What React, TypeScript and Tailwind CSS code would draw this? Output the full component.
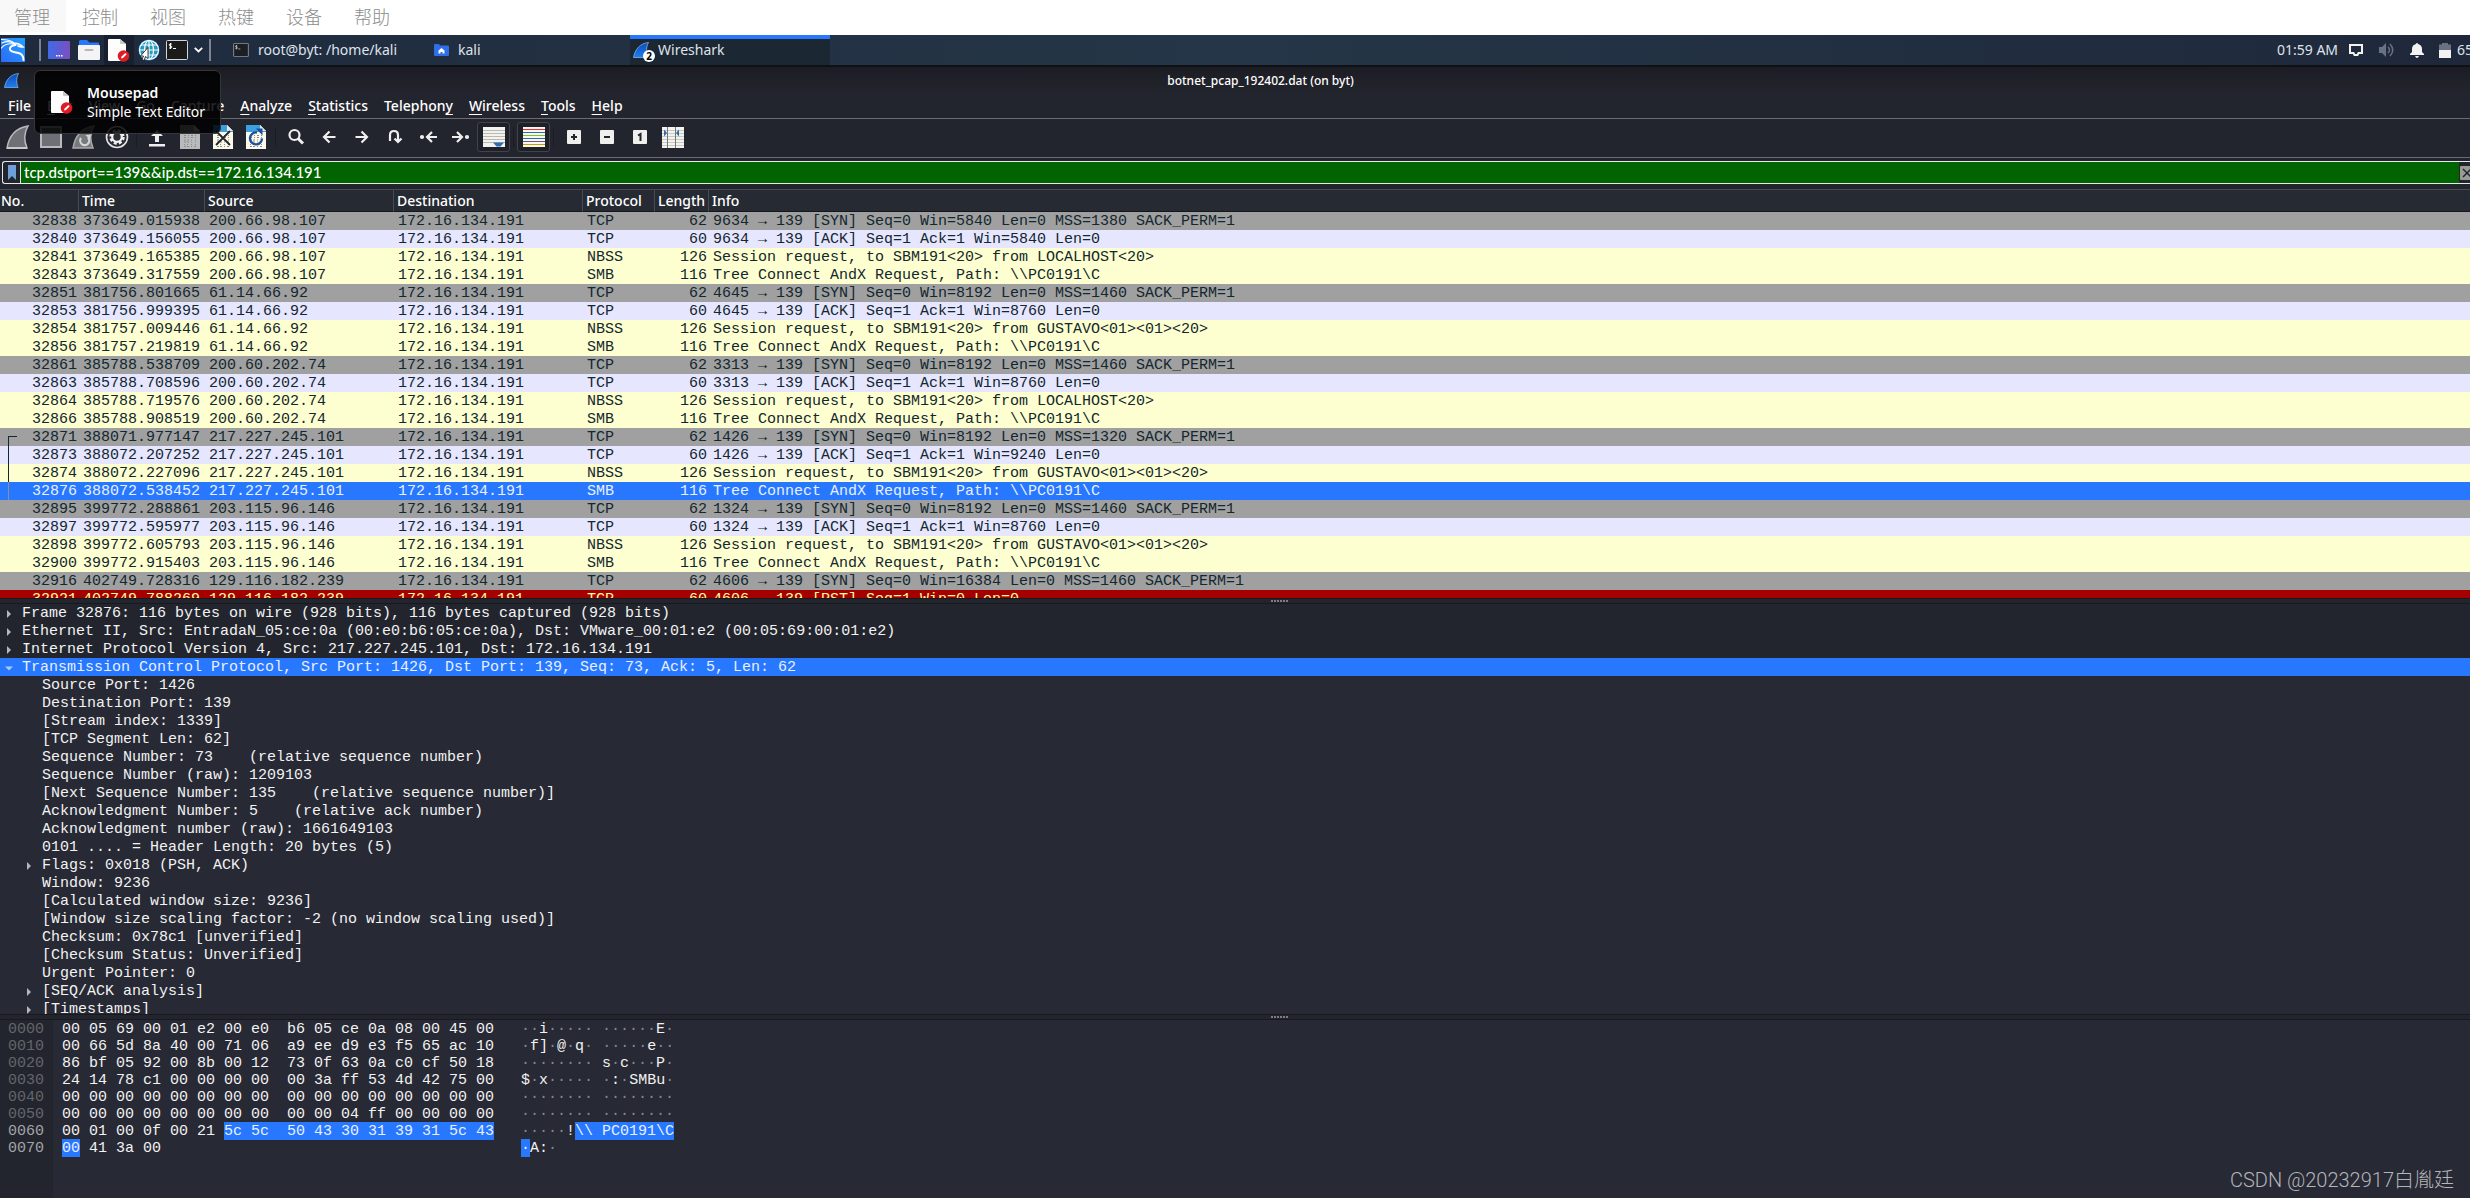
import type { ReactNode } from "react";
import clsx from "clsx";

const hostMenu = ["控制", "视图", "热键", "设备", "帮助"];

const appMenu: [string, string, string][] = [
  ["", "F", "ile"],
  ["", "E", "dit"],
  ["", "V", "iew"],
  ["", "G", "o"],
  ["", "C", "apture"],
  ["", "A", "nalyze"],
  ["", "S", "tatistics"],
  ["Telephon", "y", ""],
  ["", "W", "ireless"],
  ["", "T", "ools"],
  ["", "H", "elp"],
];

const DST = "172.16.134.191";

// no, time, source, protocol, length, info
const packets: [string, string, string, string, string, string][] = [
  ["32838", "373649.015938", "200.66.98.107", "TCP", "62", "9634 → 139 [SYN] Seq=0 Win=5840 Len=0 MSS=1380 SACK_PERM=1"],
  ["32840", "373649.156055", "200.66.98.107", "TCP", "60", "9634 → 139 [ACK] Seq=1 Ack=1 Win=5840 Len=0"],
  ["32841", "373649.165385", "200.66.98.107", "NBSS", "126", "Session request, to SBM191<20> from LOCALHOST<20>"],
  ["32843", "373649.317559", "200.66.98.107", "SMB", "116", "Tree Connect AndX Request, Path: \\\\PC0191\\C"],
  ["32851", "381756.801665", "61.14.66.92", "TCP", "62", "4645 → 139 [SYN] Seq=0 Win=8192 Len=0 MSS=1460 SACK_PERM=1"],
  ["32853", "381756.999395", "61.14.66.92", "TCP", "60", "4645 → 139 [ACK] Seq=1 Ack=1 Win=8760 Len=0"],
  ["32854", "381757.009446", "61.14.66.92", "NBSS", "126", "Session request, to SBM191<20> from GUSTAVO<01><01><20>"],
  ["32856", "381757.219819", "61.14.66.92", "SMB", "116", "Tree Connect AndX Request, Path: \\\\PC0191\\C"],
  ["32861", "385788.538709", "200.60.202.74", "TCP", "62", "3313 → 139 [SYN] Seq=0 Win=8192 Len=0 MSS=1460 SACK_PERM=1"],
  ["32863", "385788.708596", "200.60.202.74", "TCP", "60", "3313 → 139 [ACK] Seq=1 Ack=1 Win=8760 Len=0"],
  ["32864", "385788.719576", "200.60.202.74", "NBSS", "126", "Session request, to SBM191<20> from LOCALHOST<20>"],
  ["32866", "385788.908519", "200.60.202.74", "SMB", "116", "Tree Connect AndX Request, Path: \\\\PC0191\\C"],
  ["32871", "388071.977147", "217.227.245.101", "TCP", "62", "1426 → 139 [SYN] Seq=0 Win=8192 Len=0 MSS=1320 SACK_PERM=1"],
  ["32873", "388072.207252", "217.227.245.101", "TCP", "60", "1426 → 139 [ACK] Seq=1 Ack=1 Win=9240 Len=0"],
  ["32874", "388072.227096", "217.227.245.101", "NBSS", "126", "Session request, to SBM191<20> from GUSTAVO<01><01><20>"],
  ["32876", "388072.538452", "217.227.245.101", "SMB", "116", "Tree Connect AndX Request, Path: \\\\PC0191\\C"],
  ["32895", "399772.288861", "203.115.96.146", "TCP", "62", "1324 → 139 [SYN] Seq=0 Win=8192 Len=0 MSS=1460 SACK_PERM=1"],
  ["32897", "399772.595977", "203.115.96.146", "TCP", "60", "1324 → 139 [ACK] Seq=1 Ack=1 Win=8760 Len=0"],
  ["32898", "399772.605793", "203.115.96.146", "NBSS", "126", "Session request, to SBM191<20> from GUSTAVO<01><01><20>"],
  ["32900", "399772.915403", "203.115.96.146", "SMB", "116", "Tree Connect AndX Request, Path: \\\\PC0191\\C"],
  ["32916", "402749.728316", "129.116.182.239", "TCP", "62", "4606 → 139 [SYN] Seq=0 Win=16384 Len=0 MSS=1460 SACK_PERM=1"],
  ["32921", "402749.788269", "129.116.182.239", "TCP", "60", "4606 → 139 [RST] Seq=1 Win=0 Len=0"],
];

const SELECTED = "32876";

const rowColor = (no: string, protocol: string, info: string) => {
  if (no === SELECTED) return "bg-[#2777ff] text-[#e8f0ff]";
  if (info.includes("[RST]")) return "bg-[#a40000] text-[#fffc9c]";
  if (info.includes("[SYN]")) return "bg-[#a0a0a0] text-[#12272e]";
  if (protocol === "TCP") return "bg-[#e7e6ff] text-[#12272e]";
  return "bg-[#feffd0] text-[#12272e]";
};

// marks the packets that belong to the selected conversation
const streamMark: Record<string, string> = {
  "32871": "top-2 bottom-0 w-[9px] border-l border-t border-[#12272e]",
  "32873": "inset-y-0 border-l border-[#12272e]",
  "32874": "inset-y-0 border-l border-[#12272e]",
  "32876": "inset-y-0 border-l border-[#8a8f98]",
};

const layers = [
  "Frame 32876: 116 bytes on wire (928 bits), 116 bytes captured (928 bits)",
  "Ethernet II, Src: EntradaN_05:ce:0a (00:e0:b6:05:ce:0a), Dst: VMware_00:01:e2 (00:05:69:00:01:e2)",
  "Internet Protocol Version 4, Src: 217.227.245.101, Dst: 172.16.134.191",
];

const tcpFields: { text: string; expandable?: boolean }[] = [
  { text: "Source Port: 1426" },
  { text: "Destination Port: 139" },
  { text: "[Stream index: 1339]" },
  { text: "[TCP Segment Len: 62]" },
  { text: "Sequence Number: 73    (relative sequence number)" },
  { text: "Sequence Number (raw): 1209103" },
  { text: "[Next Sequence Number: 135    (relative sequence number)]" },
  { text: "Acknowledgment Number: 5    (relative ack number)" },
  { text: "Acknowledgment number (raw): 1661649103" },
  { text: "0101 .... = Header Length: 20 bytes (5)" },
  { text: "Flags: 0x018 (PSH, ACK)", expandable: true },
  { text: "Window: 9236" },
  { text: "[Calculated window size: 9236]" },
  { text: "[Window size scaling factor: -2 (no window scaling used)]" },
  { text: "Checksum: 0x78c1 [unverified]" },
  { text: "[Checksum Status: Unverified]" },
  { text: "Urgent Pointer: 0" },
  { text: "[SEQ/ACK analysis]", expandable: true },
  { text: "[Timestamps]", expandable: true },
];

// each dump is split as [before, selected, after]
type Parts = [string, string, string];
const bytes: { offset: string; hex: Parts; ascii: Parts }[] = [
  { offset: "0000", hex: ["00 05 69 00 01 e2 00 e0  b6 05 ce 0a 08 00 45 00", "", ""], ascii: ["··i····· ······E·", "", ""] },
  { offset: "0010", hex: ["00 66 5d 8a 40 00 71 06  a9 ee d9 e3 f5 65 ac 10", "", ""], ascii: ["·f]·@·q· ·····e··", "", ""] },
  { offset: "0020", hex: ["86 bf 05 92 00 8b 00 12  73 0f 63 0a c0 cf 50 18", "", ""], ascii: ["········ s·c···P·", "", ""] },
  { offset: "0030", hex: ["24 14 78 c1 00 00 00 00  00 3a ff 53 4d 42 75 00", "", ""], ascii: ["$·x····· ·:·SMBu·", "", ""] },
  { offset: "0040", hex: ["00 00 00 00 00 00 00 00  00 00 00 00 00 00 00 00", "", ""], ascii: ["········ ········", "", ""] },
  { offset: "0050", hex: ["00 00 00 00 00 00 00 00  00 00 04 ff 00 00 00 00", "", ""], ascii: ["········ ········", "", ""] },
  { offset: "0060", hex: ["00 01 00 0f 00 21 ", "5c 5c  50 43 30 31 39 31 5c 43", ""], ascii: ["·····!", "\\\\ PC0191\\C", ""] },
  { offset: "0070", hex: ["", "00", " 41 3a 00"], ascii: ["", "·", "A:·"] },
];

/* ---------- icons ---------- */

const KaliLogo = () => (
  <svg width="24" height="24" viewBox="0 0 24 24">
    <defs>
      <linearGradient id="kali" x1="0" y1="1" x2="1" y2="0">
        <stop offset="0" stopColor="#2b6cf6" />
        <stop offset="1" stopColor="#22a0ff" />
      </linearGradient>
    </defs>
    <path d="M0 0h24v24H0z" fill="url(#kali)" />
    <g fill="none" stroke="#fff" strokeLinecap="round">
      <path d="M.5 1.500C5 1.500 9 2 12.500 4.500" strokeWidth="1.200" />
      <path d="M1 5c3-1.500 8-2 12.500.5" strokeWidth="1.200" />
      <path d="M.5 10C3 6.500 8 5 14 6.200" strokeWidth="1.200" />
      <path d="M13 5.500c3-.5 6 .5 9 3.500-2 .2-3.500-.2-5-1" strokeWidth="1.600" />
      <path d="M14.500 7c-4 .3-6 2.200-5.500 4.500.6 2.600 5 2.600 8.500 3.500 3.500 1 5 3.500 5 7" strokeWidth="2" />
    </g>
  </svg>
);

const DesktopIcon = () => (
  <svg width="22" height="18" viewBox="0 0 22 18">
    <defs>
      <linearGradient id="desk" x1="0" y1="0" x2="1" y2="0">
        <stop offset="0" stopColor="#3f6be8" />
        <stop offset="1" stopColor="#7a4fc0" />
      </linearGradient>
    </defs>
    <rect width="22" height="18" rx="1" fill="url(#desk)" />
    <path d="M8 14h1.500v1.500H8zM10.500 14H12v1.500h-1.500zM13 14h1.500v1.500H13z" fill="#fff" />
  </svg>
);

const FilesIcon = () => (
  <svg width="22" height="20" viewBox="0 0 22 20">
    <path d="M1 6V1.500Q1 0 2.500 0H9l2.500 2.500H20q1 0 1 1V8H1z" fill="#2777ff" />
    <rect y="5" width="22" height="15" rx="1" fill="#f4f4f4" />
    <rect x="6.500" y="9" width="9" height="2" rx="1" fill="#b8b8b8" />
  </svg>
);

const MousepadIcon = () => (
  <svg width="22" height="23" viewBox="0 0 22 23">
    <path d="M1 0h11l6 5v17H1q-1 0-1-1V1q0-1 1-1z" fill="#fdfdfd" />
    <path d="M12 0v4q0 1 1 1h5z" fill="#c9c9c9" />
    <circle cx="15.500" cy="17" r="5.800" fill="#e01b24" />
    <path d="m13 19.500.6-2 3.700-3.600 1.400 1.400-3.700 3.600z" fill="#fff" />
  </svg>
);

const GlobeIcon = () => (
  <svg width="22" height="22" viewBox="0 0 22 22">
    <circle cx="11" cy="11" r="10.500" fill="#1f8fd6" />
    <circle cx="11" cy="11" r="8" fill="#2ba7a8" opacity=".6" />
    <g fill="none" stroke="#fff" strokeWidth="1.200">
      <circle cx="11" cy="11" r="9.500" />
      <ellipse cx="11" cy="11" rx="4.500" ry="9.500" />
      <path d="M11 1v20M1.500 11h19M3 6h16M3 16h16" />
    </g>
  </svg>
);

const TerminalIcon = ({ className }: { className: string }) => (
  <svg className={className} viewBox="0 0 22 20">
    <rect x=".5" y=".5" width="21" height="19" rx="1" fill="#1b1b1b" stroke="#d5d5d5" />
    <path d="M5.800 4H4.200q-1 0-1 1t1 1h.6q1 0 1 1t-1 1H3M4.500 3v6M7 8.500h3" fill="none" stroke="#fff" />
  </svg>
);

const HomeFolderIcon = () => (
  <svg width="15" height="12" viewBox="0 0 15 12">
    <path d="M0 2V1q0-1 1-1h4l1 1.500h8q1 0 1 1V11q0 1-1 1H1q-1 0-1-1z" fill="#2e6fe8" />
    <path d="M7.500 4 4.500 6.500V9.500H6.500V8h2v1.500h2V6.500z" fill="#fff" />
  </svg>
);

const BlueFin = ({ className }: { className: string }) => (
  <svg className={className} viewBox="0 0 16 16">
    <defs>
      <linearGradient id="fin" x1="0" y1="0" x2="0" y2="1">
        <stop offset="0" stopColor="#0c4bb4" />
        <stop offset="1" stopColor="#1f7ff0" />
      </linearGradient>
    </defs>
    <path d="M.5 15.500C2 7 7 1.500 15.500.5 13 5 13 10 15 15.500z" fill="url(#fin)" stroke="#8fc0f5" strokeWidth=".7" />
  </svg>
);

const FIN = "M1 23C3 11 10 3 22 1c-4 7-4 15-1 22z";

const StartIcon = () => (
  <svg width="24" height="24" viewBox="0 0 24 24">
    <path d={FIN} fill="#6e7075" stroke="#b9babd" strokeWidth="1.500" />
    <path d="M1 23h20" stroke="#c8c9cb" strokeWidth="2" />
  </svg>
);

const StopIcon = () => (
  <svg width="24" height="24" viewBox="0 0 24 24">
    <rect x="2" y="2" width="20" height="20" fill="#6e7075" stroke="#b9babd" strokeWidth="2" />
  </svg>
);

const RestartIcon = () => (
  <svg width="24" height="24" viewBox="0 0 24 24">
    <path d={FIN} fill="#77797d" stroke="#a9aaad" strokeWidth="1.500" />
    <path d="M9 13a4.500 4.500 0 1 0 7-.5" fill="none" stroke="#d4d5d6" strokeWidth="2.200" />
    <path d="m13.500 10 5.500-.5-1 5.500z" fill="#d4d5d6" />
  </svg>
);

const OptionsIcon = () => (
  <svg width="24" height="24" viewBox="0 0 24 24">
    <circle cx="12" cy="12" r="10.500" fill="#2c2d33" stroke="#e6e6e6" strokeWidth="1.600" />
    <circle cx="12" cy="12" r="6.500" fill="none" stroke="#f2f2f2" strokeWidth="2.400" strokeDasharray="3 2.100" />
    <circle cx="12" cy="12" r="4.800" fill="none" stroke="#f2f2f2" strokeWidth="2.200" />
  </svg>
);

const OpenIcon = () => (
  <svg width="24" height="24" viewBox="0 0 24 24" fill="#efefef">
    <path d="M4 19h16v2.500H4zM12 5l6 6h-4v6h-4v-6H6z" />
  </svg>
);

const FileIcon = ({ tone, band, children }: { tone: string; band: string; children?: ReactNode }) => (
  <svg width="20" height="24" viewBox="0 0 20 24">
    <path d="M0 0h14l6 6v18H0z" fill={tone} />
    <path d="M0 0h14v6h6v1H0z" fill={band} />
    <path d="M14 0v6h6z" fill="#e9e9e9" />
    <path d="M4 10.500h2M8 10.500h1M11 10.500h2M15 10.500h1M4 12.500h2M8 12.500h1M11 12.500h2M15 12.500h1M4 15h2M7 15h2M11 15h1M15 15h1M4 17h2M7 17h2M11 17h1M15 17h1M4 19.500h1M7 19.500h1M11 19.500h1M15 19.500h1M4 21.500h2M7 21.500h2M11 21.500h1M14 21.500h2" stroke="#8d8d88" strokeWidth="1.200" />
    {children}
  </svg>
);

const CloseFileIcon = () => (
  <FileIcon tone="#fbfaea" band="#3b9fe0">
    <path d="m3 6 14 14M17 6 3 20" stroke="#23272e" strokeWidth="1.800" />
  </FileIcon>
);

const ReloadIcon = () => (
  <FileIcon tone="#fbfaea" band="#3b9fe0">
    <path d="M11 7.500a6 6 0 1 0 5 6" fill="none" stroke="#1d4f9c" strokeWidth="2.400" />
    <path d="M10 3.500h6.500v7z" fill="#1d4f9c" />
  </FileIcon>
);

const LineIcon = ({ children }: { children: ReactNode }) => (
  <svg width="18" height="18" viewBox="0 0 18 18" fill="none" stroke="#efefef" strokeWidth="2.200">
    {children}
  </svg>
);

const FindIcon = () => (
  <LineIcon>
    <circle cx="7.500" cy="7" r="5" />
    <path d="m11 10.500 5 5" strokeWidth="3" />
  </LineIcon>
);
const BackIcon = () => (
  <LineIcon>
    <path d="M15.500 9H5M9.500 3.500 4 9l5.500 5.500" />
  </LineIcon>
);
const ForwardIcon = () => (
  <LineIcon>
    <path d="M2.500 9H13M8.500 3.500 14 9l-5.500 5.500" />
  </LineIcon>
);
const GotoIcon = () => (
  <LineIcon>
    <path d="M4 13V7q0-4 4-4t4 4v7M8.500 10.500l3.500 3.500 3.500-3.500" />
  </LineIcon>
);
const FirstIcon = () => (
  <LineIcon>
    <path d="M18 9H9M13 4 8 9l5 5" />
    <circle cx="3" cy="9" r="1" />
  </LineIcon>
);
const LastIcon = () => (
  <LineIcon>
    <path d="M0 9h9M5 4l5 5-5 5" />
    <circle cx="15" cy="9" r="1" />
  </LineIcon>
);

const AutoScrollIcon = () => (
  <svg width="22" height="20" viewBox="0 0 22 20">
    <path d="M0 0h22v20H0z" fill="#f2f2ee" />
    <path d="M0 3.500h22M0 6.500h22M0 9.500h22M0 12.500h22M0 15.500h22" stroke="#b9b9b4" />
    <path d="M10 15.500h11l-3.500 4h-4z" fill="#3069b4" />
  </svg>
);

const ColorizeIcon = () => (
  <svg width="22" height="20" viewBox="0 0 22 20">
    <path d="M0 0h22v20H0z" fill="#f7f7f3" />
    <path d="M0 2.500h22" stroke="#ef2929" />
    <path d="M0 5.500h22M0 11.500h22" stroke="#3069b4" />
    <path d="M0 8.500h22" stroke="#73c716" />
    <path d="M0 14.500h22" stroke="#75507b" />
    <path d="M0 17.500h22" stroke="#c4a000" />
  </svg>
);

const SquareIcon = ({ d }: { d: string }) => (
  <svg width="14" height="14" viewBox="0 0 14 14">
    <rect width="14" height="14" rx="1" fill="#efefec" />
    <path d={d} fill="none" stroke="#22252e" strokeWidth="2" />
  </svg>
);

const ResizeIcon = () => (
  <svg width="22" height="21" viewBox="0 0 22 21">
    <path d="M0 0h22v21H0z" fill="#f2f2ee" />
    <path d="M0 3.500h22M0 6.500h22M0 9.500h22M0 12.500h22M0 15.500h22M0 18.500h22" stroke="#c9c9c4" />
    <path d="M5.500 0v21M13.500 0v21" stroke="#77777a" />
    <path d="M2 2.500 5 6 2 9.500zM17 2.500 14 6l3 3.500z" fill="#3069b4" />
  </svg>
);

const Expander = ({ open }: { open?: boolean }) => (
  <svg width="8" height="8" viewBox="0 0 8 8" className="shrink-0">
    <path d={open ? "M0 2.500h8L4 6.500z" : "M2 0l4 4-4 4z"} fill={open ? "#a9c9ff" : "#b5b7bb"} />
  </svg>
);

/* ---------- pieces ---------- */

const ToolButton = ({ label, active, children }: { label: string; active?: boolean; children: ReactNode }) => (
  <button
    aria-label={label}
    className={clsx(
      "flex h-[30px] w-[33px] items-center justify-center",
      active && "rounded-[3px] border border-[#41434b] bg-[#1f2128]"
    )}
  >
    {children}
  </button>
);

const ToolSeparator = () => <span className="mx-[3px] h-5 w-px bg-[#1b1d23]" />;

const PanelSeparator = () => <span className="h-[22px] w-[2px] bg-[#7d8491]" />;

const HostMenu = () => (
  <nav className="flex h-[35px] bg-white font-['Noto_Sans_CJK_SC',sans-serif] text-lg leading-8 font-light text-[#8c8c8c]">
    <button className="h-8 w-[66px] bg-[#f8f8f8] pr-4 pl-[14px]">管理</button>
    {hostMenu.map((item) => (
      <button key={item} className="h-8 px-4">
        {item}
      </button>
    ))}
  </nav>
);

const Taskbar = () => (
  <header className="relative flex h-8 items-center overflow-hidden border-b-2 border-[#101116] bg-linear-to-r from-[#1f2a3d] via-[#243647] to-[#1f283b] text-sm text-[#dfe3ea]">
    <button aria-label="Applications" className="ml-px">
      <KaliLogo />
    </button>
    <span className="ml-[14px] flex">
      <PanelSeparator />
    </span>
    <button aria-label="Show desktop" className="flex w-9 justify-center">
      <DesktopIcon />
    </button>
    <button aria-label="File manager" className="ml-px flex w-[22px] justify-center">
      <FilesIcon />
    </button>
    <button aria-label="Text editor" className="ml-1 flex h-full w-[30px] items-center justify-center bg-[#182030]">
      <MousepadIcon />
    </button>
    <button aria-label="Web browser" className="relative flex w-[30px] justify-center">
      <GlobeIcon />
      <svg width="10" height="14" viewBox="0 0 10 14" className="absolute top-2 left-1.5">
        <path d="M8 .5v11l-2.500-2-1.500 4-2-1 1.500-3.500H.5z" fill="#fff" stroke="#111" strokeWidth=".8" />
      </svg>
    </button>
    <button aria-label="Terminal" className="ml-0.5">
      <TerminalIcon className="h-5 w-[22px]" />
    </button>
    <button aria-label="More terminals" className="ml-1.5">
      <svg width="9" height="6" viewBox="0 0 9 6" fill="none" stroke="#fff" strokeWidth="1.800">
        <path d="m.8.8 3.700 3.700L8.200.8" />
      </svg>
    </button>
    <span className="ml-1.5 flex">
      <PanelSeparator />
    </span>
    <div className="ml-[18px] flex h-full">
      <button className="flex w-[201px] items-center pl-1">
        <TerminalIcon className="mr-[9px] h-[14px] w-4 opacity-80" />
        root@byt: /home/kali
      </button>
      <button className="flex w-[200px] items-center pl-1">
        <span className="mr-[9px]">
          <HomeFolderIcon />
        </span>
        kali
      </button>
      <button className="flex w-[200px] items-center border-t-4 border-[#2777ff] bg-[#1b2733] pb-1 pl-[3px]">
        <span className="relative mr-[9px]">
          <BlueFin className="h-4 w-4" />
          <span className="absolute -right-1.5 -bottom-1 h-3 w-3 rounded-full bg-white text-center text-[10px] leading-3 font-bold text-black">
            2
          </span>
        </span>
        Wireshark
      </button>
    </div>
    <div className="ml-auto flex w-[193px] shrink-0 items-center overflow-hidden whitespace-nowrap">
      <span className="w-[72px] shrink-0">01:59 AM</span>
      <svg width="14" height="12" viewBox="0 0 14 12" className="shrink-0">
        <path d="M1 1h12v8H9.500l-1 2h-3l-1-2H1z" fill="none" stroke="#f2f2f2" strokeWidth="2" />
      </svg>
      <svg width="16" height="16" viewBox="0 0 16 16" className="ml-4 shrink-0" fill="#6a7180">
        <path d="M0 5h3l4-4v14l-4-4H0z" />
        <path d="M9 5q3 3 0 6M11 2q5.500 6 0 12" fill="none" stroke="#6a7180" strokeWidth="1.500" />
      </svg>
      <svg width="14" height="15" viewBox="0 0 14 15" className="ml-[15px] shrink-0" fill="#f2f2f2">
        <path d="M6 1q0-1 1-1t1 1q4 1 4 5v3l2 2v1H0v-1l2-2V6q0-4 4-5zM5 13h4q-1 2-2 2t-2-2z" />
      </svg>
      <svg width="12" height="15" viewBox="0 0 12 15" className="ml-[15px] shrink-0">
        <path d="M3 0h6v1.500h3V7H0V1.500h3z" fill="#6a7180" />
        <path d="M0 7h12v8H0z" fill="#f2f2f2" />
      </svg>
      <span className="ml-1.5">65%</span>
    </div>
  </header>
);

const LauncherTooltip = () => (
  <div
    role="tooltip"
    className="absolute top-[70px] left-[34px] flex h-16 w-[187px] items-center rounded-md border border-[#34363b] bg-black/85 pl-4 text-sm leading-[19px] text-white"
  >
    <span className="mr-[14px]">
      <MousepadIcon />
    </span>
    <div className="whitespace-nowrap">
      <p className="font-semibold">Mousepad</p>
      <p>Simple Text Editor</p>
    </div>
  </div>
);

const Toolbar = () => (
  <div className="flex h-[39px] items-center border-b border-[#6b6c72] bg-[#23252e] pb-0.5 pl-px">
    <ToolButton label="Start capture"><StartIcon /></ToolButton>
    <ToolButton label="Stop capture"><StopIcon /></ToolButton>
    <ToolButton label="Restart capture"><RestartIcon /></ToolButton>
    <ToolButton label="Capture options"><OptionsIcon /></ToolButton>
    <ToolSeparator />
    <ToolButton label="Open file"><OpenIcon /></ToolButton>
    <ToolButton label="Save file"><FileIcon tone="#b9babd" band="#a4a6a9" /></ToolButton>
    <ToolButton label="Close file"><CloseFileIcon /></ToolButton>
    <ToolButton label="Reload file"><ReloadIcon /></ToolButton>
    <ToolSeparator />
    <ToolButton label="Find packet"><FindIcon /></ToolButton>
    <ToolButton label="Previous packet"><BackIcon /></ToolButton>
    <ToolButton label="Next packet"><ForwardIcon /></ToolButton>
    <ToolButton label="Go to packet"><GotoIcon /></ToolButton>
    <ToolButton label="First packet"><FirstIcon /></ToolButton>
    <ToolButton label="Last packet"><LastIcon /></ToolButton>
    <ToolButton label="Auto scroll" active><AutoScrollIcon /></ToolButton>
    <ToolSeparator />
    <ToolButton label="Colorize" active><ColorizeIcon /></ToolButton>
    <ToolSeparator />
    <ToolButton label="Zoom in"><SquareIcon d="M4 7h6M7 4v6" /></ToolButton>
    <ToolButton label="Zoom out"><SquareIcon d="M4 7h6" /></ToolButton>
    <ToolButton label="Normal size"><SquareIcon d="M5 5.500 7.500 4v7" /></ToolButton>
    <ToolButton label="Resize columns"><ResizeIcon /></ToolButton>
  </div>
);

const FilterBar = () => (
  <div className="bg-[#23252e] pt-[3px] pb-[5px] pl-0.5">
    <div className="flex h-[23px] rounded-l-[3px] border border-r-0 border-[#e8e8e8]">
      <button aria-label="Filter bookmarks" className="flex w-[18px] items-center justify-center border-r border-[#e8e8e8]">
        <svg width="8" height="15" viewBox="0 0 8 15">
          <path d="M0 0h8v15l-4-4-4 4z" fill="#6f9fd8" />
        </svg>
      </button>
      <input
        aria-label="Display filter"
        defaultValue="tcp.dstport==139&&ip.dst==172.16.134.191"
        className="min-w-0 flex-1 bg-[#006400] pl-[3px] font-['Lato','Noto_Sans',sans-serif] text-[15px] font-medium text-white outline-none"
      />
      <button aria-label="Clear filter" className="flex w-[11px] items-center overflow-hidden pl-px">
        <svg width="14" height="14" viewBox="0 0 14 14" className="shrink-0">
          <rect width="14" height="14" rx="1" fill="#9a9b95" />
          <path d="m3 3 8 8M11 3l-8 8" stroke="#23252e" strokeWidth="1.500" />
        </svg>
      </button>
    </div>
  </div>
);

const headCell = "h-[23px] border-t border-b border-t-[#484b52] border-b-[#15171b] bg-[#262a32] text-left font-medium text-white";

const PacketList = () => (
  <div className="min-h-0 flex-[409] overflow-hidden bg-[#23252e]">
    <table className="w-full table-fixed border-separate border-spacing-0">
      <colgroup>
        <col className="w-[79px]" />
        <col className="w-[126px]" />
        <col className="w-[189px]" />
        <col className="w-[189px]" />
        <col className="w-[72px]" />
        <col className="w-[54px]" />
        <col />
      </colgroup>
      <thead className="text-sm leading-5">
        <tr>
          {["No.", "Time", "Source", "Destination", "Protocol", "Length", "Info"].map((title) => (
            <th
              key={title}
              className={clsx(
                headCell,
                title === "No." ? "pl-px" : "pl-[3px]",
                title !== "Info" && "border-r border-r-[#484b52]"
              )}
            >
              {title}
            </th>
          ))}
        </tr>
      </thead>
      <tbody className="font-['Liberation_Mono',monospace] text-[15px] leading-[17px] whitespace-nowrap">
        {packets.map(([no, time, source, protocol, length, info]) => (
          <tr key={no} className={rowColor(no, protocol, info)}>
            <td className="relative pt-px pr-0.5 text-right">
              {streamMark[no] && <span className={clsx("absolute left-2", streamMark[no])} />}
              {no}
            </td>
            <td className="pt-px pl-1">{time}</td>
            <td className="pt-px pl-1">{source}</td>
            <td className="pt-px pl-1">{DST}</td>
            <td className="pt-px pl-1">{protocol}</td>
            <td className="pt-px pr-0.5 text-right">{length}</td>
            <td className="pt-px pl-1">{info}</td>
          </tr>
        ))}
      </tbody>
    </table>
  </div>
);

const Splitter = () => (
  <div className="flex h-1.5 shrink-0 items-center justify-center gap-px border-y border-[#17191d] bg-[#23252e] pl-[88px]">
    {[0, 1, 2, 3, 4, 5].map((dot) => (
      <span key={dot} className="h-0.5 w-0.5 bg-[#7c7e84]" />
    ))}
  </div>
);

const PacketDetails = () => (
  <ul className="min-h-0 flex-[410] overflow-hidden bg-[#272934] font-['Liberation_Mono',monospace] text-[15px] leading-[17px] whitespace-pre text-[#f2f2f2]">
    {layers.map((text) => (
      <li key={text} className="flex items-center bg-[#22252d] pt-px pl-[5px]">
        <Expander />
        <span className="pl-[9px]">{text}</span>
      </li>
    ))}
    <li className="flex items-center bg-[#2777ff] pt-px pl-[5px] text-[#e8f0ff]">
      <Expander open />
      <span className="pl-[9px]">
        Transmission Control Protocol, Src Port: 1426, Dst Port: 139, Seq: 73, Ack: 5, Len: 62
      </span>
    </li>
    {tcpFields.map(({ text, expandable }) => (
      <li key={text} className={clsx("flex items-center pt-px", expandable ? "pl-[25px]" : "pl-[42px]")}>
        {expandable && <Expander />}
        <span className={expandable ? "pl-[9px]" : ""}>{text}</span>
      </li>
    ))}
  </ul>
);

const Ascii = ({ text }: { text: string }) =>
  text.split(/(·+)/).map((part, i) =>
    part.startsWith("·") ? (
      <span key={i} className="text-[#85878e]">
        {part}
      </span>
    ) : (
      part
    )
  );

const PacketBytes = () => (
  <div className="min-h-0 flex-[178] overflow-hidden bg-[#272934] font-['Liberation_Mono',monospace] text-[15px] leading-[17px] whitespace-pre text-[#f2f2f2]">
    <div className="flex h-full">
      <div className="w-[53px] shrink-0 bg-[#22252d] pt-px pl-2">
        {bytes.map(({ offset }) => (
          <div key={offset} className={offset >= "0060" ? "text-[#a3a5a8]" : "text-[#64666c]"}>
            {offset}
          </div>
        ))}
      </div>
      <div className="w-[459px] shrink-0 pt-px pl-[9px]">
        {bytes.map(({ offset, hex }) => (
          <div key={offset}>
            {hex[0]}
            <span className="bg-[#2777ff] pt-px text-[#e8f0ff]">{hex[1]}</span>
            {hex[2]}
          </div>
        ))}
      </div>
      <div className="pt-px pl-[9px]">
        {bytes.map(({ offset, ascii }) => (
          <div key={offset}>
            <Ascii text={ascii[0]} />
            <span className="bg-[#2777ff] pt-px text-[#e8f0ff]">{ascii[1]}</span>
            <Ascii text={ascii[2]} />
          </div>
        ))}
      </div>
    </div>
  </div>
);

const App = () => (
  <div className="relative flex h-screen flex-col overflow-hidden bg-[#23252e] font-['Noto_Sans','Noto_Sans_CJK_SC',sans-serif]">
    <HostMenu />
    <Taskbar />
    <div className="flex h-[27px] items-center bg-linear-to-b from-[#1c1d23] to-[#23252e] pl-1">
      <BlueFin className="h-[15px] w-[15px]" />
      <h1 className="flex-1 pl-8 text-center text-xs font-medium text-white">
        botnet_pcap_192402.dat (on byt)
      </h1>
    </div>
    <nav className="flex h-[25px] items-center gap-4 border-b border-[#6b6c72] pl-2 text-sm font-medium text-white">
      {appMenu.map(([before, key, after]) => (
        <button key={before + key + after}>
          {before}
          <span className="underline underline-offset-3">{key}</span>
          {after}
        </button>
      ))}
    </nav>
    <Toolbar />
    <FilterBar />
    <PacketList />
    <Splitter />
    <PacketDetails />
    <Splitter />
    <PacketBytes />
    <LauncherTooltip />
    <p className="absolute right-4 bottom-1 font-['Roboto','Noto_Sans_CJK_SC',sans-serif] text-xl font-light text-[#b4b5b9]">
      CSDN @20232917白胤廷
    </p>
  </div>
);

export default App;
